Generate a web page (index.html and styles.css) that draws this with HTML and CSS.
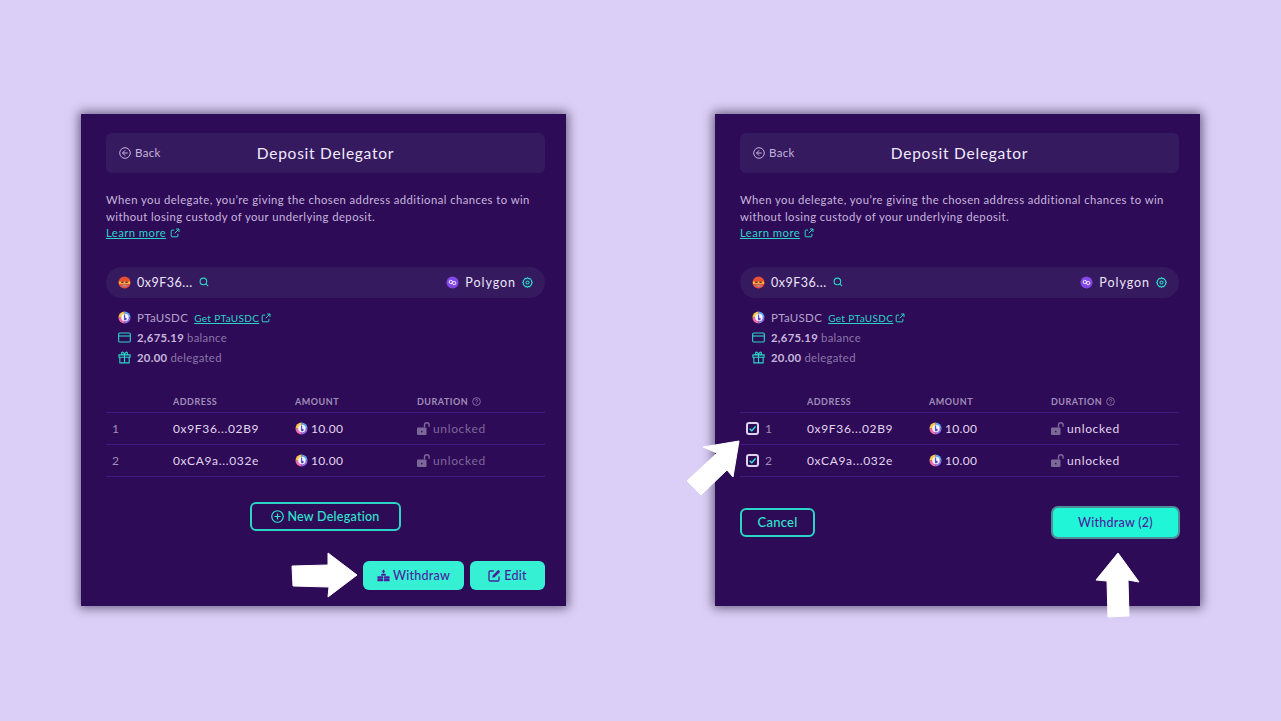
FILE: index.html
```html
<!DOCTYPE html>
<html lang="en">
<head>
  <meta charset="UTF-8" />
  <title>Deposit Delegator</title>
  <link rel="stylesheet" href="styles.css">
</head>
<body>

  <svg class="defs" width="0" height="0">
    <defs>
      <symbol id="external" viewBox="0 0 12 12">
        <path d="M9.500 7v2.600a1 1 0 0 1-1 1H2.400a1 1 0 0 1-1-1V3.500a1 1 0 0 1 1-1H5M7.300 1.200h3.500v3.500M10.600 1.400 5.600 6.400" fill="none" stroke="currentColor" stroke-width="1.200" />
      </symbol>
      <symbol id="avatar" viewBox="0 0 14 14">
        <circle cx="7" cy="7" r="6.500" fill="#e8502f" />
        <path d="M1 6h12v2.500H1z" fill="#f5b83d" />
        <path d="M2.500 9.500h9l-1.500 2.500H4z" fill="#d0567f" />
        <path d="M3.500 6h2.500v1.500H3.500zM8 6h2.500v1.500H8z" fill="#6a2a3f" />
        <path d="M5 10h4v1H5z" fill="#8fc36b" />
      </symbol>
      <symbol id="token" viewBox="0 0 14 14">
        <path d="M7 .5A6.500 6.500 0 0 1 13.500 7H7z" fill="#5aa6f2" />
        <path d="M13.500 7A6.500 6.500 0 0 1 7 13.500V7z" fill="#8b6fe8" />
        <path d="M7 13.500A6.500 6.500 0 0 1 .5 7H7z" fill="#ee6aa8" />
        <path d="M.5 7A6.500 6.500 0 0 1 7 .5V7z" fill="#f6c64f" />
        <circle cx="7.500" cy="7" r="4" fill="#f6f2fc" />
        <path d="M6.400 3.800h1.300v3.400c1.200 0 1.700.6 1.700 1.300 0 .9-.9 1.400-1.700 1.400H6.400z" fill="#5a49c8" />
      </symbol>
      <symbol id="polygon" viewBox="0 0 14 14">
        <circle cx="7" cy="7" r="6.500" fill="#8247e5" />
        <circle cx="5.200" cy="6.400" r="1.800" fill="none" stroke="#fff" stroke-width="0.900" />
        <circle cx="8.800" cy="7.600" r="1.800" fill="none" stroke="#fff" stroke-width="0.900" />
      </symbol>
      <symbol id="search" viewBox="0 0 10 10">
        <circle cx="4.400" cy="4.400" r="3.300" fill="none" stroke="currentColor" stroke-width="1.100" />
        <path d="M6.800 6.800 9.200 9.200" stroke="currentColor" stroke-width="1.100" />
      </symbol>
      <symbol id="gear" viewBox="0 0 12 12">
        <path d="M6 .8l1.100 1 1.500-.2.600 1.300 1.300.6-.2 1.500 1 1-1 1 .2 1.500-1.300.6-.6 1.300-1.500-.2-1.100 1-1.100-1-1.500.2-.6-1.300-1.300-.6.2-1.500-1-1 1-1-.2-1.500 1.300-.6.6-1.300 1.500.2z" fill="none" stroke="currentColor" stroke-width="1.200" />
        <circle cx="6" cy="6" r="1.700" fill="none" stroke="currentColor" stroke-width="1.200" />
      </symbol>
      <symbol id="card" viewBox="0 0 14 12">
        <rect x="0.700" y="1.200" width="12.600" height="9.600" rx="1.200" fill="none" stroke="currentColor" stroke-width="1.200" />
        <path d="M.7 4.400h12.600" stroke="currentColor" stroke-width="1.200" />
      </symbol>
      <symbol id="gift" viewBox="0 0 14 14">
        <path d="M1 4.200h12v2.600H1zM2 6.800h10v6H2zM7 4.200v8.600M7 4.200C5 4.200 3.600 3.400 3.800 2 4.100.6 6.200 1 7 4.200c.8-3.200 2.900-3.600 3.200-2.200.2 1.400-1.200 2.200-3.200 2.200z" fill="none" stroke="currentColor" stroke-width="1.200" />
      </symbol>
      <symbol id="help" viewBox="0 0 10 10">
        <circle cx="5" cy="5" r="4.300" fill="none" stroke="currentColor" stroke-width="0.800" />
        <path d="M3.700 4c0-1.700 2.700-1.700 2.700 0 0 1-1.400 1-1.400 2M5 7v.7" fill="none" stroke="currentColor" stroke-width="0.800" />
      </symbol>
      <symbol id="lock" viewBox="0 0 13 13">
        <rect x="0" y="5.500" width="9.500" height="7.500" rx="1" fill="currentColor" />
        <path d="M7.500 5.500V3a2.300 2.300 0 0 1 4.600 0v1.800" fill="none" stroke="currentColor" stroke-width="1.400" />
        <rect x="4.100" y="8.800" width="1.300" height="1.500" fill="#2e0b57" />
      </symbol>
      <symbol id="plusCircle" viewBox="0 0 12 12">
        <circle cx="6" cy="6" r="5.300" fill="none" stroke="currentColor" stroke-width="1.100" />
        <path d="M6 3.200v5.600M3.200 6h5.600" stroke="currentColor" stroke-width="1.100" />
      </symbol>
      <symbol id="coins" viewBox="0 0 14 13">
        <path d="M7 0 9 2.400H7.800V4H6.200V2.400H5z" fill="currentColor" />
        <rect x="4.400" y="4.600" width="5.200" height="2.300" rx="1" fill="currentColor" />
        <rect x="0.300" y="7.400" width="6.400" height="2.500" rx="1" fill="currentColor" />
        <rect x="7.300" y="7.400" width="6.400" height="2.500" rx="1" fill="currentColor" />
        <rect x="0.300" y="10.300" width="6.400" height="2.500" rx="1" fill="currentColor" />
        <rect x="7.300" y="10.300" width="6.400" height="2.500" rx="1" fill="currentColor" />
      </symbol>
      <symbol id="edit" viewBox="0 0 13 13">
        <path d="M11 7.500v3.300a1.200 1.200 0 0 1-1.200 1.200H2.200A1.200 1.200 0 0 1 1 10.800V3.200A1.200 1.200 0 0 1 2.200 2h3.600" fill="none" stroke="currentColor" stroke-width="1.300" />
        <path d="M10.300.8 12.200 2.700 6.600 8.300l-2.400.5.500-2.400z" fill="currentColor" />
      </symbol>
    </defs>
  </svg>

  <div class="page">

    <!-- view before selecting -->
    <section class="panel">
      <div class="top-bar">
        <a class="back">
          <svg class="back-icon" viewBox="0 0 12 12"><circle cx="6" cy="6" r="5.300" fill="none" stroke="currentColor" /><path d="M6.200 3.300 3.500 6l2.700 2.700M3.500 6h5.200" fill="none" stroke="currentColor" /></svg>
          Back
        </a>
        <h1>Deposit Delegator</h1>
      </div>
      <p class="intro">When you delegate, you’re giving the chosen address additional chances to win<br>without losing custody of your underlying deposit.<br><a class="link">Learn more</a> <svg class="ext"><use href="#external" /></svg></p>

      <div class="pill">
        <div class="pill-side">
          <svg class="avatar"><use href="#avatar" /></svg>
          <span class="addr">0x9F36...</span>
          <svg class="small-icon search"><use href="#search" /></svg>
        </div>
        <div class="pill-side">
          <svg class="avatar"><use href="#polygon" /></svg>
          <span class="network">Polygon</span>
          <svg class="small-icon gear"><use href="#gear" /></svg>
        </div>
      </div>

      <ul class="token-info">
        <li><svg class="info-icon"><use href="#token" /></svg><span class="dim-strong">PTaUSDC</span><a class="link tiny">Get PTaUSDC</a><svg class="ext"><use href="#external" /></svg></li>
        <li><svg class="info-icon teal"><use href="#card" /></svg><b>2,675.19</b><span class="dim">balance</span></li>
        <li><svg class="info-icon teal"><use href="#gift" /></svg><b>20.00</b><span class="dim">delegated</span></li>
      </ul>

      <div class="table">
        <div class="row head">
          <span></span><span>ADDRESS</span><span>AMOUNT</span>
          <span>DURATION <svg class="help"><use href="#help" /></svg></span>
        </div>
        <div class="row">
          <span class="num">1</span><span>0x9F36...02B9</span>
          <span class="amount"><svg class="coin"><use href="#token" /></svg>10.00</span>
          <span class="duration faded"><svg class="lock"><use href="#lock" /></svg>unlocked</span>
        </div>
        <div class="row">
          <span class="num">2</span><span>0xCA9a...032e</span>
          <span class="amount"><svg class="coin"><use href="#token" /></svg>10.00</span>
          <span class="duration faded"><svg class="lock"><use href="#lock" /></svg>unlocked</span>
        </div>
      </div>

      <div class="center-action">
        <button class="btn outline new-btn"><svg class="btn-icon"><use href="#plusCircle" /></svg>New Delegation</button>
      </div>
      <div class="bottom-actions">
        <button class="btn solid withdraw-btn"><svg class="btn-icon"><use href="#coins" /></svg>Withdraw</button>
        <button class="btn solid edit-btn"><svg class="btn-icon"><use href="#edit" /></svg>Edit</button>
      </div>

      <svg class="arrow arrow-right" viewBox="0 0 68 46"><path d="M1 14 37 13 37 1 66 23 37 45 38 35 2 34z" /></svg>
    </section>

    <!-- view while selecting -->
    <section class="panel">
      <div class="top-bar">
        <a class="back">
          <svg class="back-icon" viewBox="0 0 12 12"><circle cx="6" cy="6" r="5.300" fill="none" stroke="currentColor" /><path d="M6.200 3.300 3.500 6l2.700 2.700M3.500 6h5.200" fill="none" stroke="currentColor" /></svg>
          Back
        </a>
        <h1>Deposit Delegator</h1>
      </div>
      <p class="intro">When you delegate, you’re giving the chosen address additional chances to win<br>without losing custody of your underlying deposit.<br><a class="link">Learn more</a> <svg class="ext"><use href="#external" /></svg></p>

      <div class="pill">
        <div class="pill-side">
          <svg class="avatar"><use href="#avatar" /></svg>
          <span class="addr">0x9F36...</span>
          <svg class="small-icon search"><use href="#search" /></svg>
        </div>
        <div class="pill-side">
          <svg class="avatar"><use href="#polygon" /></svg>
          <span class="network">Polygon</span>
          <svg class="small-icon gear"><use href="#gear" /></svg>
        </div>
      </div>

      <ul class="token-info">
        <li><svg class="info-icon"><use href="#token" /></svg><span class="dim-strong">PTaUSDC</span><a class="link tiny">Get PTaUSDC</a><svg class="ext"><use href="#external" /></svg></li>
        <li><svg class="info-icon teal"><use href="#card" /></svg><b>2,675.19</b><span class="dim">balance</span></li>
        <li><svg class="info-icon teal"><use href="#gift" /></svg><b>20.00</b><span class="dim">delegated</span></li>
      </ul>

      <div class="table">
        <div class="row head">
          <span></span><span>ADDRESS</span><span>AMOUNT</span>
          <span>DURATION <svg class="help"><use href="#help" /></svg></span>
        </div>
        <div class="row">
          <span class="num"><span class="check"><svg viewBox="0 0 10 10"><path d="M1.800 5.200 4.200 7.500 8.400 2.800" fill="none" stroke="#2fe6cf" stroke-width="1.500" /></svg></span>1</span>
          <span>0x9F36...02B9</span>
          <span class="amount"><svg class="coin"><use href="#token" /></svg>10.00</span>
          <span class="duration"><svg class="lock"><use href="#lock" /></svg>unlocked</span>
        </div>
        <div class="row">
          <span class="num"><span class="check"><svg viewBox="0 0 10 10"><path d="M1.800 5.200 4.200 7.500 8.400 2.800" fill="none" stroke="#2fe6cf" stroke-width="1.500" /></svg></span>2</span>
          <span>0xCA9a...032e</span>
          <span class="amount"><svg class="coin"><use href="#token" /></svg>10.00</span>
          <span class="duration"><svg class="lock"><use href="#lock" /></svg>unlocked</span>
        </div>
      </div>

      <div class="select-actions">
        <button class="btn outline cancel-btn">Cancel</button>
        <button class="btn solid confirm-btn">Withdraw (2)</button>
      </div>

      <svg class="arrow arrow-diag" viewBox="0 0 54 56"><path d="M17 7 53 1 47 37 41 30 15 55 1 41 31 13z" /></svg>
      <svg class="arrow arrow-up" viewBox="0 0 46 66"><path d="M23 1 1 28 12 29 13 65 34 64 33 28 44 30z" /></svg>
    </section>

  </div>
</body>
</html>
```

FILE: styles.css
```css
* {
  box-sizing: border-box;
}
html,
body {
  height: 100%;
}
body {
  margin: 0;
  background: #dccff7;
  font-family: 'Lato', sans-serif;
  color: #e6dcf5;
}
.defs {
  position: absolute;
}
.page {
  display: flex;
  gap: 149px;
  padding: 114px 0 0 81px;
}
.panel {
  position: relative;
  width: 485px;
  height: 492px;
  padding: 19px 21px 0 25px;
  background: #2e0b57;
  box-shadow: 0 0 10px 2px rgba(30, 18, 50, 0.6);
  flex-shrink: 0;
}
.top-bar {
  position: relative;
  display: flex;
  align-items: center;
  justify-content: center;
  height: 40px;
  background: #351a60;
  border-radius: 6px;
}
.top-bar h1 {
  margin: 0;
  font-size: 15.5px;
  font-weight: 400;
  letter-spacing: 0.75px;
  color: #f1ebfa;
}
.back {
  position: absolute;
  left: 13px;
  top: 13px;
  display: flex;
  align-items: center;
  gap: 4px;
  font-size: 11.5px;
  letter-spacing: 0.3px;
  color: #c4b3dc;
}
.back-icon {
  width: 12px;
  height: 12px;
}
.intro {
  margin: 19px 0 0;
  font-size: 11.3px;
  line-height: 16.5px;
  letter-spacing: 0.43px;
  color: #c6b6dd;
}
.link {
  color: #2bd4c6;
  text-decoration: underline;
}
.tiny {
  font-size: 10px;
  margin-left: 6px;
  letter-spacing: 0.35px;
}
.ext {
  width: 10px;
  height: 10px;
  margin-left: 1px;
  color: #2bd4c6;
  vertical-align: -1px;
}
.token-info .ext {
  margin-left: 2px;
}
.pill {
  display: flex;
  align-items: center;
  justify-content: space-between;
  height: 31px;
  margin-top: 25px;
  padding: 0 12px;
  background: #351a60;
  border-radius: 16px;
}
.pill-side {
  display: flex;
  align-items: center;
}
.avatar {
  width: 13px;
  height: 13px;
  margin-right: 6px;
}
.addr {
  font-size: 12.5px;
  letter-spacing: 0.5px;
  color: #ece4f7;
}
.network {
  font-size: 12.5px;
  letter-spacing: 0.95px;
  color: #ece4f7;
}
.small-icon {
  color: #2bd4c6;
}
.search {
  width: 10px;
  height: 10px;
  margin-left: 6px;
}
.gear {
  width: 11px;
  height: 11px;
  margin-left: 6px;
}
.token-info {
  list-style: none;
  margin: 10px 0 0;
  padding: 0 0 0 12px;
  font-size: 11.3px;
  letter-spacing: 0.3px;
}
.token-info li {
  display: flex;
  align-items: center;
  height: 20px;
}
.info-icon {
  width: 13px;
  height: 13px;
  margin-right: 6px;
}
.teal {
  color: #2bd4c6;
}
.token-info b {
  font-weight: 700;
  color: #c6b6dd;
}
.dim-strong {
  color: #b3a2cc;
  font-size: 11.5px;
}
.dim {
  margin-left: 3px;
  color: #8a76a8;
}
.table {
  margin-top: 24px;
}
.row {
  display: grid;
  grid-template-columns: 61px 122px 122px 1fr;
  align-items: center;
  height: 32px;
  padding-left: 6px;
  border-bottom: 1px solid #451a85;
  font-size: 12px;
  letter-spacing: 0.65px;
  color: #e0d6ef;
}
.row.head {
  height: 21px;
  font-size: 9px;
  font-weight: 700;
  letter-spacing: 0.5px;
  color: #a08db9;
}
.help {
  width: 9px;
  height: 9px;
  margin-left: 1px;
  vertical-align: -1px;
}
.num {
  display: flex;
  align-items: center;
  gap: 6px;
  color: #a08db9;
}
.check {
  display: flex;
  align-items: center;
  justify-content: center;
  width: 13px;
  height: 13px;
  border: 2px solid #ddd2ec;
  border-radius: 3px;
}
.check svg {
  width: 9px;
  height: 9px;
}
.amount {
  display: flex;
  align-items: center;
  letter-spacing: 0.3px;
}
.coin {
  width: 13px;
  height: 13px;
  margin-right: 3px;
}
.duration {
  display: flex;
  align-items: center;
}
.lock {
  width: 13px;
  height: 13px;
  margin-right: 3px;
  color: #7c6799;
}
.faded {
  color: #7c6799;
}
.btn {
  display: flex;
  align-items: center;
  justify-content: center;
  border-radius: 6px;
  font-family: inherit;
  font-size: 12.5px;
  font-weight: 500;
  letter-spacing: 0.25px;
  padding: 0;
}
.btn.outline {
  background: transparent;
  border: 2px solid #2bd4c6;
  color: #2fe6cf;
}
.btn.solid {
  background: #36f0d4;
  border: none;
  color: #4a1f9e;
}
.btn-icon {
  width: 13px;
  height: 13px;
  margin-right: 3px;
}
.center-action {
  display: flex;
  justify-content: center;
  margin-top: 25px;
}
.new-btn {
  width: 151px;
  height: 29px;
}
.bottom-actions {
  display: flex;
  justify-content: flex-end;
  gap: 6px;
  margin-top: 30px;
}
.withdraw-btn {
  width: 101px;
  height: 29px;
}
.edit-btn {
  width: 75px;
  height: 29px;
}
.select-actions {
  display: flex;
  justify-content: space-between;
  align-items: flex-start;
  margin-top: 29px;
}
.cancel-btn {
  width: 75px;
  height: 29px;
  margin-top: 2px;
  font-size: 13px;
}
.btn.solid.confirm-btn {
  width: 129px;
  height: 33px;
  margin-right: -1px;
  border: 2px solid #4d8f99;
  border-radius: 7px;
  background: #20f5d8;
}
.arrow {
  position: absolute;
  fill: #fff;
  stroke: #fff;
  stroke-width: 1;
  stroke-linejoin: round;
}
.arrow-right {
  left: 210px;
  top: 438px;
  width: 68px;
  height: 46px;
}
.arrow-diag {
  left: -29px;
  top: 326px;
  width: 54px;
  height: 56px;
}
.arrow-up {
  left: 380px;
  top: 438px;
  width: 46px;
  height: 66px;
}
```
